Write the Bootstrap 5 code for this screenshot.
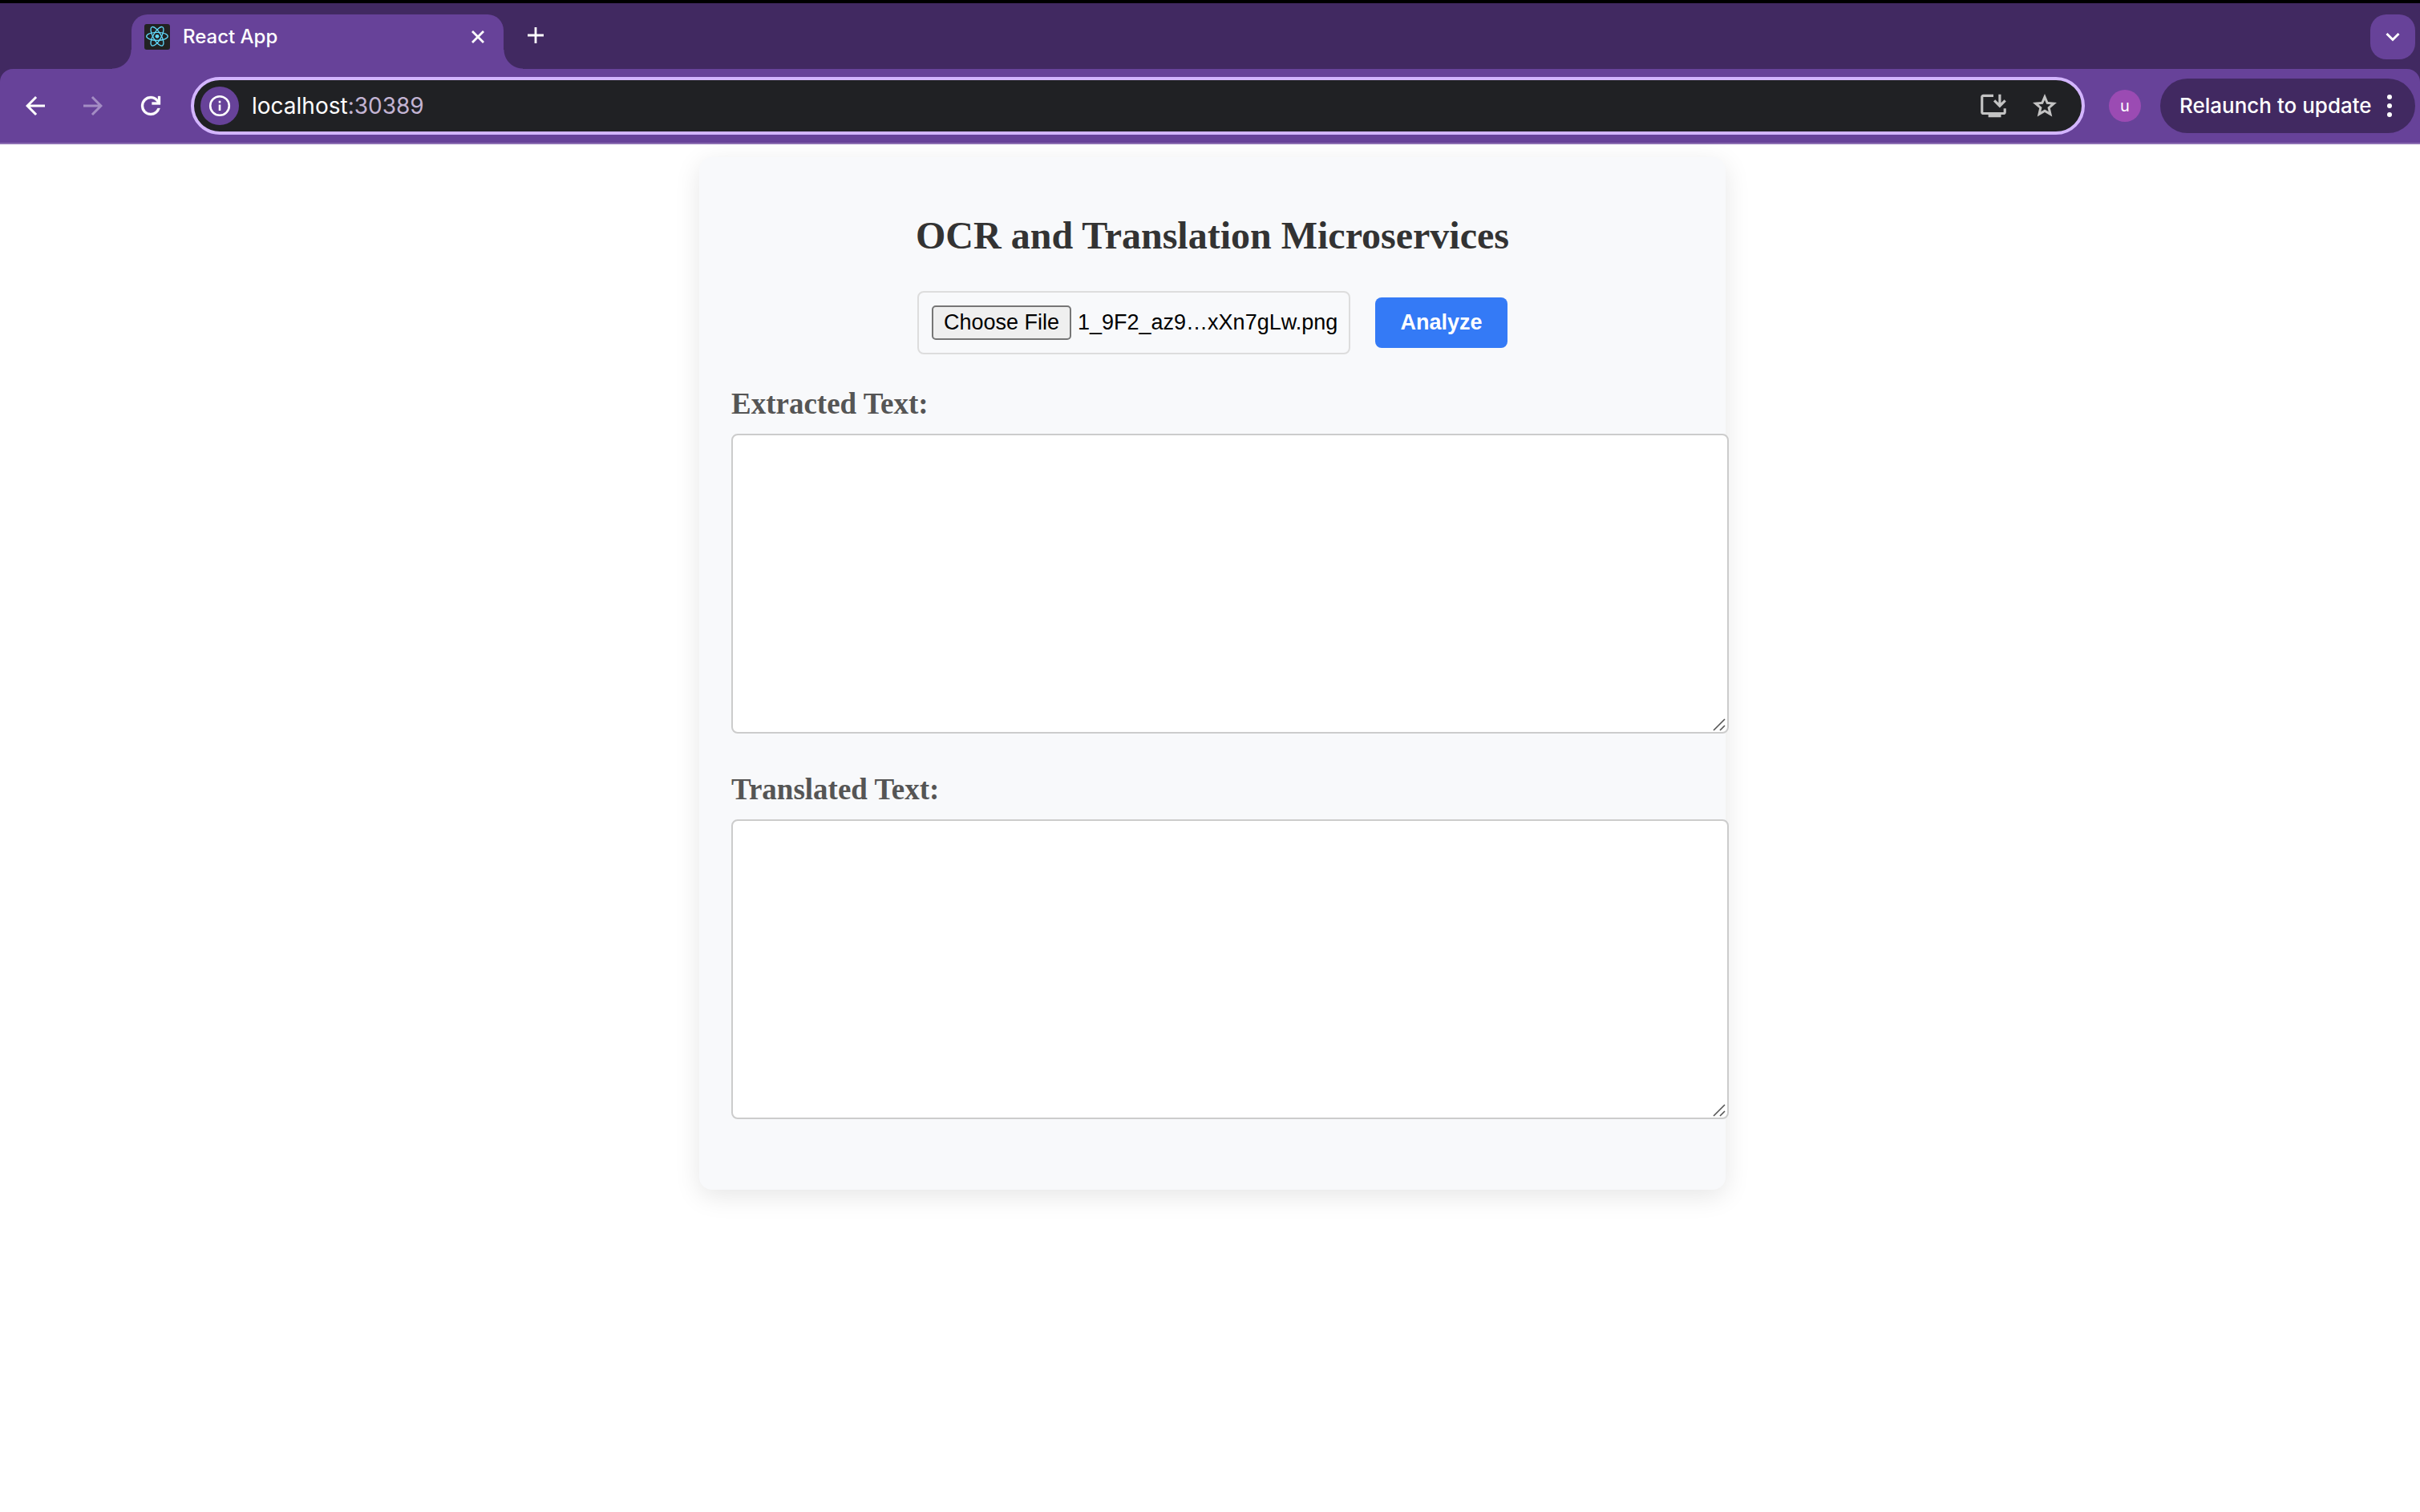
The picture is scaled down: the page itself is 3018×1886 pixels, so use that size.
<!DOCTYPE html>
<html lang="en">
<head>
<meta charset="utf-8">
<meta name="viewport" content="width=device-width, initial-scale=1">
<title>React App</title>
<link rel="stylesheet" href="https://cdn.jsdelivr.net/npm/bootstrap@5.3.0/dist/css/bootstrap.min.css">
<style>
  :root { --strip: #412961; --bar: #674299; --ring: #d3b5ff; }
  body { font-family: Inter, sans-serif; color: #fff; }
  button svg, .tool-icon { display: block; flex: none; }
  .bare { background: none; border: 0; padding: 0; color: inherit; }

  /* tab strip */
  .tab-strip { background: var(--strip); border-top: 4px solid #000; height: 86px; padding: 14px 6px 0 164px; }
  .page-tab { position: relative; width: 464px; height: 68px; padding: 0 22px 12px 16px; background: var(--bar); border-radius: 20px 20px 0 0; }
  .page-tab::before, .page-tab::after { content: ""; position: absolute; bottom: 0; width: 24px; height: 24px; }
  .page-tab::before { right: 100%; background: radial-gradient(circle at 0 0, transparent 23px, var(--bar) 24px); }
  .page-tab::after { left: 100%; background: radial-gradient(circle at 100% 0, transparent 23px, var(--bar) 24px); }
  .tab-title { font-size: 24px; line-height: 32px; font-weight: 500; margin-left: 16px; }
  .new-tab { margin: 14px 0 0 28px; }
  .tab-search { width: 56px; height: 56px; border-radius: 20px; background: var(--bar); }

  /* toolbar */
  .bar-back { background: var(--strip); }
  .tool-bar { background: var(--bar); border-radius: 16px 16px 0 0; height: 94px; padding: 10px 6px 10px 26px; border-bottom: 2px solid #8d6fb3; }
  .nav-tools { gap: 36px; width: 212px; }
  .omnibox { height: 72px; border: 4px solid var(--ring); border-radius: 36px; background: #202124; padding: 0 28px 0 8px; }
  .site-info { width: 48px; height: 48px; border-radius: 50%; background: var(--bar); }
  .address { font-size: 28px; line-height: 36px; margin-left: 16px; outline: 0; }
  .address-port { color: #c3b4d3; }
  .omni-tools { gap: 27px; color: #c3c3c3; }
  .profile { width: 40px; height: 40px; border-radius: 50%; background: #9b4bb3; font-size: 20px; line-height: 24px; margin: 0 24px 0 30px; }
  .relaunch { height: 68px; border-radius: 34px; background: var(--strip); font-size: 26px; line-height: 32px; font-weight: 500; padding: 0 24px; gap: 12px; width: 318px; }

  /* page */
  .page-area { padding: 16px 0 48px 6px; }
  .ocr-card { width: 100%; max-width: 1280px; background: #f8f9fb; border-radius: 16px; padding: 70px 40px 88px; box-shadow: 0 8px 32px rgba(0,0,0,.1); }
  .ocr-title { font: bold 48px/56px "Liberation Serif", serif; color: #333; margin-bottom: 41px; }
  .picker-row { gap: 31px; margin-bottom: 40px; font-family: "Liberation Sans", sans-serif; }
  .file-box { width: 540px; height: 79px; border: 2px solid #ddd; border-radius: 8px; padding: 0 16px; color: #000; font-size: 27px; line-height: 32px; gap: 8px; }
  .choose { height: 43px; width: 174px; padding: 0 0 2px; border: 2px solid #767676; border-radius: 5px; background: #efefef; color: #000; line-height: 32px; }
  .analyze { width: 165px; height: 63px; padding: 0 0 2px; border: 0; border-radius: 8px; background: #347af6; font-size: 27px; line-height: 32px; font-weight: 700; }
  .file-name { padding-bottom: 2px; }
  .text-group + .text-group { margin-top: 48px; }
  .text-group label { display: block; font: bold 37px/44px "Liberation Serif", serif; color: #555; margin-bottom: 15px; }
  .text-wrap { position: relative; width: calc(100% + 44px); }
  .text-wrap textarea { display: block; width: 100%; height: 374px; padding: 20px; border: 2px solid #ccc; border-radius: 8px; background: #fff; resize: none; font-size: 28px; }
  .grip { position: absolute; right: 4px; bottom: 3px; pointer-events: none; }
</style>
<script src="https://cdn.jsdelivr.net/npm/bootstrap@5.3.0/dist/js/bootstrap.bundle.min.js"></script>
</head>
<body class="bg-white">
<header>
  <div class="tab-strip d-flex align-items-start">
    <div class="page-tab d-flex align-items-center">
      <svg class="tool-icon" width="32" height="32" viewBox="0 0 32 32" aria-hidden="true">
        <rect width="32" height="32" rx="3" fill="#222"/>
        <g fill="none" stroke="#61dafb" stroke-width="1.3" transform="translate(16 15.3)">
          <ellipse rx="13.3" ry="5"/>
          <ellipse rx="13.3" ry="5" transform="rotate(60)"/>
          <ellipse rx="13.3" ry="5" transform="rotate(120)"/>
          <circle r="2.4" fill="#61dafb" stroke="none"/>
        </g>
      </svg>
      <span class="tab-title">React App</span>
      <button class="bare ms-auto" aria-label="Close tab"><svg width="20" height="20" viewBox="0 0 20 20" stroke="#fff" stroke-width="2.8"><path d="M3 3l14 14M17 3L3 17"/></svg></button>
    </div>
    <button class="bare new-tab" aria-label="New tab"><svg width="24" height="24" viewBox="0 0 24 24" stroke="#fff" stroke-width="2.8"><path d="M12 2v20M2 12h20"/></svg></button>
    <button class="bare tab-search ms-auto d-flex align-items-center justify-content-center" aria-label="Search tabs"><svg width="20" height="20" viewBox="0 0 20 20" fill="none" stroke="#fff" stroke-width="3"><path d="M2.500 6L10 13.500 17.500 6"/></svg></button>
  </div>
  <div class="bar-back">
    <div class="tool-bar d-flex align-items-center">
      <nav class="nav-tools d-flex align-items-center flex-shrink-0" aria-label="History">
        <button class="bare" aria-label="Back"><svg width="36" height="36" viewBox="0 0 24 24" fill="#fff"><path d="M7.825 13l5.600 5.600L12 20l-8-8 8-8 1.425 1.400L7.825 11H20v2z"/></svg></button>
        <button class="bare" aria-label="Forward" disabled><svg width="36" height="36" viewBox="0 0 24 24" fill="#a48dc4"><path d="M16.175 13H4v-2h12.175l-5.600-5.600L12 4l8 8-8 8-1.425-1.400z"/></svg></button>
        <button class="bare" aria-label="Reload"><svg width="36" height="36" viewBox="0 0 24 24" fill="#fff" stroke="#fff" stroke-width=".2"><path d="M12 20q-3.350 0-5.675-2.325T4 12t2.325-5.675T12 4q1.725 0 3.300.713T18 6.750V4h2v7h-7V9h4.200q-.8-1.400-2.187-2.200T12 6Q9.500 6 7.750 7.750T6 12t1.750 4.250T12 18q1.925 0 3.475-1.100T17.650 14h2.100q-.7 2.650-2.850 4.325T12 20z"/></svg></button>
      </nav>
      <div class="omnibox d-flex align-items-center flex-grow-1">
        <button class="bare site-info d-flex align-items-center justify-content-center" aria-label="Site information"><svg width="28" height="28" viewBox="0 0 28 28" fill="none" stroke="#fff" stroke-width="2.600"><circle cx="14" cy="14" r="11.800"/><path d="M14 12.500v7.500M14 7.700v2.800"/></svg></button>
        <div class="address flex-grow-1" role="textbox" contenteditable="true" aria-label="Address" spellcheck="false">localhost<span class="address-port">:30389</span></div>
        <div class="omni-tools d-flex align-items-center">
          <button class="bare" aria-label="Install app"><svg width="38" height="38" viewBox="0 0 24 24" fill="currentColor"><path d="M8 21v-2H4q-.825 0-1.412-.587T2 17V5q0-.825.587-1.412T4 3h8v2H4v12h16v-3h2v3q0 .825-.587 1.413T20 19h-2v2zM17 13.500l-5-5 1.400-1.400 2.600 2.575V3h2v6.675l2.600-2.575L22 8.500z"/></svg></button>
          <button class="bare" aria-label="Bookmark this tab"><svg width="36" height="36" viewBox="0 0 24 24" fill="currentColor"><path d="M8.850 16.825l3.150-1.900 3.150 1.925-.825-3.600 2.775-2.400-3.650-.325-1.450-3.400-1.450 3.375-3.650.325 2.775 2.425zM5.825 21l1.625-7.025L2 9.250l7.200-.625L12 2l2.800 6.625 7.200.625-5.450 4.725L18.175 21 12 17.275z"/></svg></button>
        </div>
      </div>
      <button class="bare profile flex-shrink-0" aria-label="Profile">u</button>
      <button class="bare relaunch d-flex align-items-center justify-content-between flex-shrink-0 text-nowrap">Relaunch to update
        <svg width="16" height="32" viewBox="0 0 16 32" fill="#fff"><circle cx="8" cy="5" r="3"/><circle cx="8" cy="16" r="3"/><circle cx="8" cy="27" r="3"/></svg>
      </button>
    </div>
  </div>
</header>

<main class="page-area">
  <div class="ocr-card mx-auto">
    <h1 class="ocr-title text-center">OCR and Translation Microservices</h1>
    <div class="picker-row d-flex align-items-center justify-content-center">
      <div class="file-box d-flex align-items-center text-nowrap">
        <input class="d-none" type="file" id="picture" accept="image/*">
        <button type="button" class="choose d-flex align-items-center justify-content-center flex-shrink-0" onclick="document.getElementById('picture').click()">Choose File</button>
        <label class="file-name" for="picture">1_9F2_az9…xXn7gLw.png</label>
      </div>
      <button type="button" class="btn btn-primary analyze">Analyze</button>
    </div>
    <div class="text-group">
      <label for="extracted">Extracted Text:</label>
      <div class="text-wrap">
        <textarea id="extracted" readonly></textarea>
        <svg class="grip" width="16" height="16" viewBox="0 0 16 16" stroke="#555" stroke-width="1.600"><path d="M1 15L15 1M9 15l6-6"/></svg>
      </div>
    </div>
    <div class="text-group">
      <label for="translated">Translated Text:</label>
      <div class="text-wrap">
        <textarea id="translated" readonly></textarea>
        <svg class="grip" width="16" height="16" viewBox="0 0 16 16" stroke="#555" stroke-width="1.600"><path d="M1 15L15 1M9 15l6-6"/></svg>
      </div>
    </div>
  </div>
</main>
</body>
</html>
